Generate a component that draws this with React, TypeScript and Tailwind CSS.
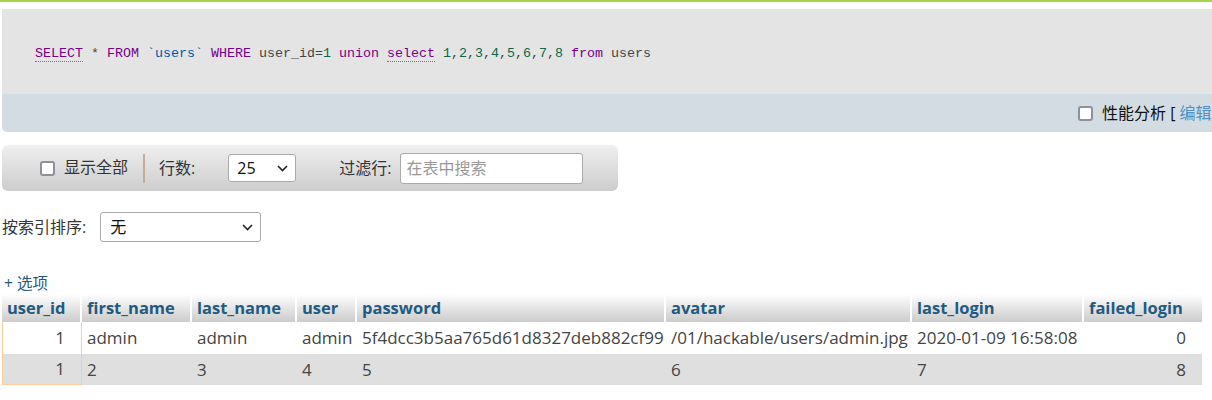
import React from "react";

const FONT = { fontFamily: '"Open Sans", "Noto Sans CJK SC", sans-serif' };

function Checkbox() {
  return <span className="inline-block w-[15px] h-[15px] rounded-[3px] border-2 border-[#8f8f9d] bg-white shrink-0" />;
}

function Chevron() {
  return (
    <svg width="11" height="7" viewBox="0 0 11 7" className="shrink-0">
      <polyline points="1,1 5.5,5.5 10,1" fill="none" stroke="#222" strokeWidth="1.6" />
    </svg>
  );
}

const cols = ["user_id", "first_name", "last_name", "user", "password", "avatar", "last_login", "failed_login"];
const rows = [
  ["1", "admin", "admin", "admin", "5f4dcc3b5aa765d61d8327deb882cf99", "/01/hackable/users/admin.jpg", "2020-01-09 16:58:08", "0"],
  ["1", "2", "3", "4", "5", "6", "7", "8"],
];

export default function App() {
  return (
    <div className="w-[1212px] h-[400px] overflow-hidden bg-white text-[#444]" style={FONT}>
      <div className="h-[2px] bg-[#a6d34c]" />
      <div className="pt-[7px] pl-[2px]">
        <div className="rounded-bl-[5px] overflow-hidden">
          <div className="h-[85px] bg-[#e4e4e4] flex items-center pl-[33px] pt-[4px] whitespace-pre text-[13.33px] text-[#444]" style={{ fontFamily: '"Liberation Mono", monospace' }}>
            <span className="text-[#770088] border-b border-dotted border-[#777] leading-[15px]">SELECT</span>
            <span> * </span>
            <span className="text-[#770088]">FROM</span>
            <span> </span>
            <span className="text-[#0055aa]">`users`</span>
            <span> </span>
            <span className="text-[#770088]">WHERE</span>
            <span> user_id=</span>
            <span className="text-[#116644]">1</span>
            <span> </span>
            <span className="text-[#770088]">union</span>
            <span> </span>
            <span className="text-[#770088] border-b border-dotted border-[#777] leading-[15px]">select</span>
            <span> </span>
            <span className="text-[#116644]">1</span>,<span className="text-[#116644]">2</span>,<span className="text-[#116644]">3</span>,<span className="text-[#116644]">4</span>,<span className="text-[#116644]">5</span>,<span className="text-[#116644]">6</span>,<span className="text-[#116644]">7</span>,<span className="text-[#116644]">8</span>
            <span> </span>
            <span className="text-[#770088]">from</span>
            <span> users</span>
          </div>
          <div className="h-[38px] bg-[#d3dce3] flex items-center pl-[1076px] whitespace-nowrap text-[16px] gap-[9px]">
            <Checkbox />
            <span className="text-[#111]">性能分析 [ <span className="text-[#4f8fc6]">编辑</span></span>
          </div>
        </div>
      </div>

      <div className="mt-[13px] ml-[2px] w-[616px] h-[46px] rounded-[6px] bg-gradient-to-b from-[#efefef] to-[#cdcdcd] flex items-center text-[16px] text-[#333]">
        <div className="ml-[38px] flex items-center gap-[9px]">
          <Checkbox />
          <span className="-mt-[2px]">显示全部</span>
        </div>
        <div className="ml-[15px] w-[2px] h-[29px] bg-[#c7ac95]" />
        <span className="ml-[14px]">行数:</span>
        <div className="ml-[33px] w-[68px] h-[28px] bg-white border border-[#aaa] rounded-[3px] flex items-center justify-between pl-[8px] pr-[7px] text-[#111]">
          <span>25</span>
          <Chevron />
        </div>
        <span className="ml-[43px]">过滤行:</span>
        <div className="ml-[9px] w-[183px] h-[31px] bg-white border border-[#aaa] rounded-[3px] flex items-center pl-[5px] text-[#999]">
          在表中搜索
        </div>
      </div>

      <div className="mt-[21px] ml-[2px] flex items-center text-[16px] text-[#333]">
        <span>按索引排序:</span>
        <div className="ml-[14px] w-[161px] h-[30px] bg-white border border-[#aaa] rounded-[3px] flex items-center justify-between pl-[9px] pr-[7px] text-[#111]">
          <span>无</span>
          <Chevron />
        </div>
      </div>

      <div className="mt-[30px] ml-[4px] text-[15.5px] leading-[22px] text-[#235a81]">+ 选项</div>

      <div className="ml-[2px] w-[1200px] grid grid-cols-[80px_110px_105px_60px_309px_246px_172px_118px]">
        {cols.map((c, i) => (
          <div
            key={c}
            className={`h-[28px] flex items-center pl-[5px] font-bold text-[16.5px] text-[#235a81] bg-gradient-to-b from-[#ffffff] to-[#cccccc] whitespace-nowrap ${i < cols.length - 1 ? "border-r-2 border-white" : ""}`}
          >
            {c}
          </div>
        ))}
        {rows.map((r, ri) =>
          r.map((v, ci) => (
            <div
              key={`${ri}-${ci}`}
              className={`${ri === 0 ? "h-[32px] bg-white" : "h-[31px] bg-[#dfdfdf]"} flex items-center text-[17px] whitespace-nowrap ${
                ci === 0 || ci === 7 ? "justify-end pr-[16px]" : "pl-[5px]"
              } ${ci === 0 ? `border-x border-[#ffcc99] ${ri === 1 ? "border-b" : ""}` : ""}`}
            >
              {v}
            </div>
          ))
        )}
      </div>
    </div>
  );
}
